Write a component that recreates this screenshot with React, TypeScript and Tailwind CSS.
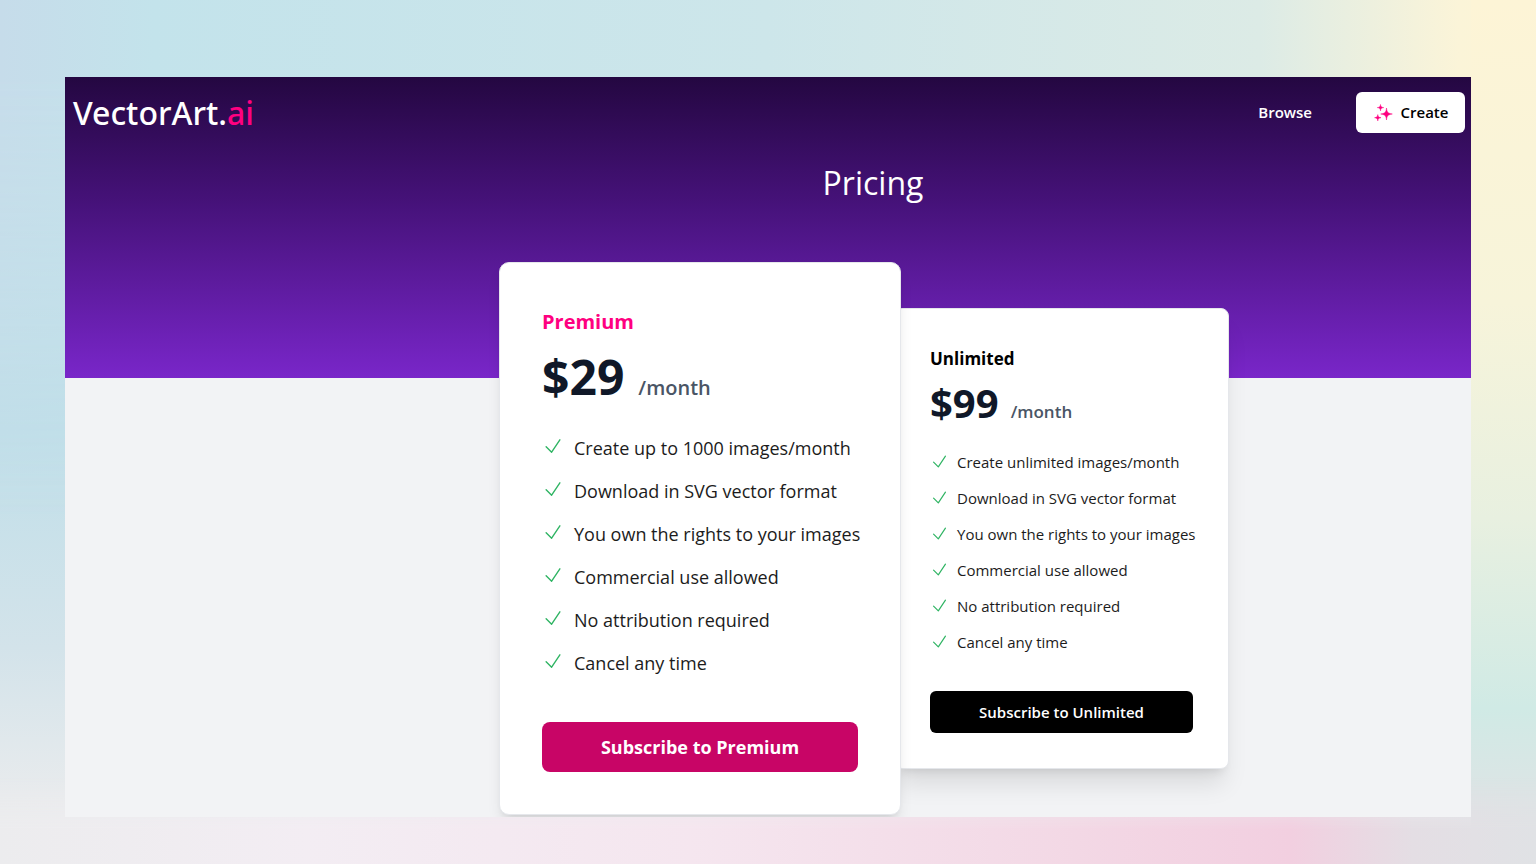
import clsx from "clsx";

interface Plan {
  name: string;
  price: string;
  features: string[];
  featured?: boolean;
}

const plans: Plan[] = [
  {
    name: "Premium",
    price: "$29",
    featured: true,
    features: [
      "Create up to 1000 images/month",
      "Download in SVG vector format",
      "You own the rights to your images",
      "Commercial use allowed",
      "No attribution required",
      "Cancel any time",
    ],
  },
  {
    name: "Unlimited",
    price: "$99",
    features: [
      "Create unlimited images/month",
      "Download in SVG vector format",
      "You own the rights to your images",
      "Commercial use allowed",
      "No attribution required",
      "Cancel any time",
    ],
  },
];

function SparklesIcon() {
  return (
    <svg
      viewBox="0 0 20 20"
      className="size-5 fill-[#ff0080] stroke-[#ff0080]"
      strokeWidth={0.5}
      strokeLinejoin="round"
      aria-hidden="true"
    >
      <path d="M13.500 5c.5 4.300 1.200 5.200 5.800 6-4.600.8-5.300 1.700-5.800 6-.5-4.300-1.200-5.200-5.800-6 4.600-.8 5.300-1.700 5.800-6Z" />
      <path d="M7.500 1.500c.3 2.300.8 2.700 3.200 3.100-2.400.4-2.900.9-3.200 3.200-.3-2.300-.8-2.800-3.200-3.200 2.400-.4 2.900-.8 3.200-3.100Z" />
      <path d="M4.800 11.600c.3 2.300.8 2.700 3.200 3.100-2.400.4-2.900.9-3.200 3.200-.3-2.300-.8-2.800-3.200-3.200 2.400-.4 2.900-.8 3.200-3.100Z" />
    </svg>
  );
}

function CheckIcon({ className }: { className: string }) {
  return (
    <svg
      viewBox="0 0 24 24"
      fill="none"
      stroke="currentColor"
      strokeWidth={1.5}
      strokeLinecap="round"
      strokeLinejoin="round"
      className={clsx("shrink-0 text-[#2fb463]", className)}
      aria-hidden="true"
    >
      <path d="m4.500 12.750 6 6 9-13.500" />
    </svg>
  );
}

function PlanCard({ plan }: { plan: Plan }) {
  const { featured } = plan;
  return (
    <section
      className={clsx(
        "border border-gray-200 bg-white",
        featured
          ? "relative z-10 w-[402px] rounded-[10px] p-[42px] shadow-lg"
          : "-ml-[7px] w-[335px] rounded-lg px-[35px] pt-9 pb-[35px] shadow-xl"
      )}
    >
      <h2
        className={clsx(
          "font-bold",
          featured ? "text-[20px] leading-[34px] text-[#ff0080]" : "text-[17px] leading-[28px] text-black"
        )}
      >
        {plan.name}
      </h2>
      <p className={clsx("flex items-baseline", featured ? "mt-[10px] gap-[14px]" : "mt-[6px] gap-3")}>
        <span
          className={clsx(
            "font-bold text-gray-900",
            featured ? "text-[48px] leading-[56px]" : "text-[40px] leading-[48px]"
          )}
        >
          {plan.price}
        </span>
        <span className={clsx("font-semibold text-gray-600", featured ? "text-[20px]" : "text-[17px]")}>
          /month
        </span>
      </p>
      <ul className={clsx("flex flex-col gap-4", featured ? "mt-[30px]" : "mt-[25px]")}>
        {plan.features.map((feature) => (
          <li
            key={feature}
            className={clsx(
              "flex items-start whitespace-nowrap text-[#1c1c1c]",
              featured ? "gap-[10px] text-[18px] leading-[27px]" : "gap-2 text-[15px] leading-[20px]"
            )}
          >
            <CheckIcon className={featured ? "size-[22px]" : "size-[19px]"} />
            {feature}
          </li>
        ))}
      </ul>
      <button
        type="button"
        className={clsx(
          "w-full text-white",
          featured
            ? "mt-[45px] h-[50px] rounded-lg bg-[#c80566] text-[18px] font-bold"
            : "mt-[39px] h-[42px] rounded-md bg-black text-[15px] font-semibold"
        )}
      >
        Subscribe to {plan.name}
      </button>
    </section>
  );
}

export default function App() {
  return (
    <div className="relative isolate flex min-h-screen flex-col overflow-hidden bg-[linear-gradient(180deg,#c9e4ea_0%,#c0dfe9_50%,#d3e3ea_75%,#e8ebed_92%,#ececee_100%)] px-[65px] pt-[77px] pb-[47px] font-['Open_Sans',sans-serif]">
      <div className="absolute inset-0 -z-10 bg-[linear-gradient(90deg,#c6dcea_0%,#c3e3eb_10%,#cde6ea_50%,#dcebe6_82%,#fbf4d8_95%,#fdf4d6_100%)] [mask-image:linear-gradient(180deg,#000_9%,transparent_60%)]" />
      <div className="absolute inset-y-0 right-0 -z-10 w-[65px] bg-[linear-gradient(180deg,#fdf4d6_0%,#f7f4da_35%,#e8f0e0_60%,#d0eae5_82%,#dde4e5_93%,#e5dde4_100%)]" />
      <div className="absolute inset-x-0 bottom-0 -z-10 h-[87px] bg-[linear-gradient(90deg,#ececee_0%,#f3edf3_20%,#f5e6ef_45%,#f3d8e5_70%,#f2cfe0_84%,#e4dee4_92%,#e0e2e5_100%)] [mask-image:linear-gradient(180deg,transparent_0%,#000_60%)]" />

      <div className="flex-1 overflow-hidden bg-[#f2f3f5]">
        <header className="h-[301px] bg-[linear-gradient(180deg,#240741_0%,#46127a_42%,#7926c9_100%)] pt-[15px] text-white">
          <nav className="flex items-center justify-between pr-[6px] pl-2">
            <a href="#" className="font-['Noto_Sans',sans-serif] text-[32px] leading-[41px] font-medium">
              VectorArt.<span className="text-[#ff0080]">ai</span>
            </a>
            <div className="flex items-center gap-11">
              <a href="#" className="text-[15px] font-semibold">
                Browse
              </a>
              <button
                type="button"
                className="flex h-[41px] w-[109px] items-center justify-center gap-2 rounded-md bg-white text-[15px] font-semibold text-black"
              >
                <SparklesIcon />
                Create
              </button>
            </div>
          </nav>
          <h1 className="mt-[26px] pl-[210px] text-center text-[32px] leading-[48px]">Pricing</h1>
        </header>
        <main className="relative -mt-[116px] flex items-center justify-center pl-48">
          {plans.map((plan) => (
            <PlanCard key={plan.name} plan={plan} />
          ))}
        </main>
      </div>
    </div>
  );
}
